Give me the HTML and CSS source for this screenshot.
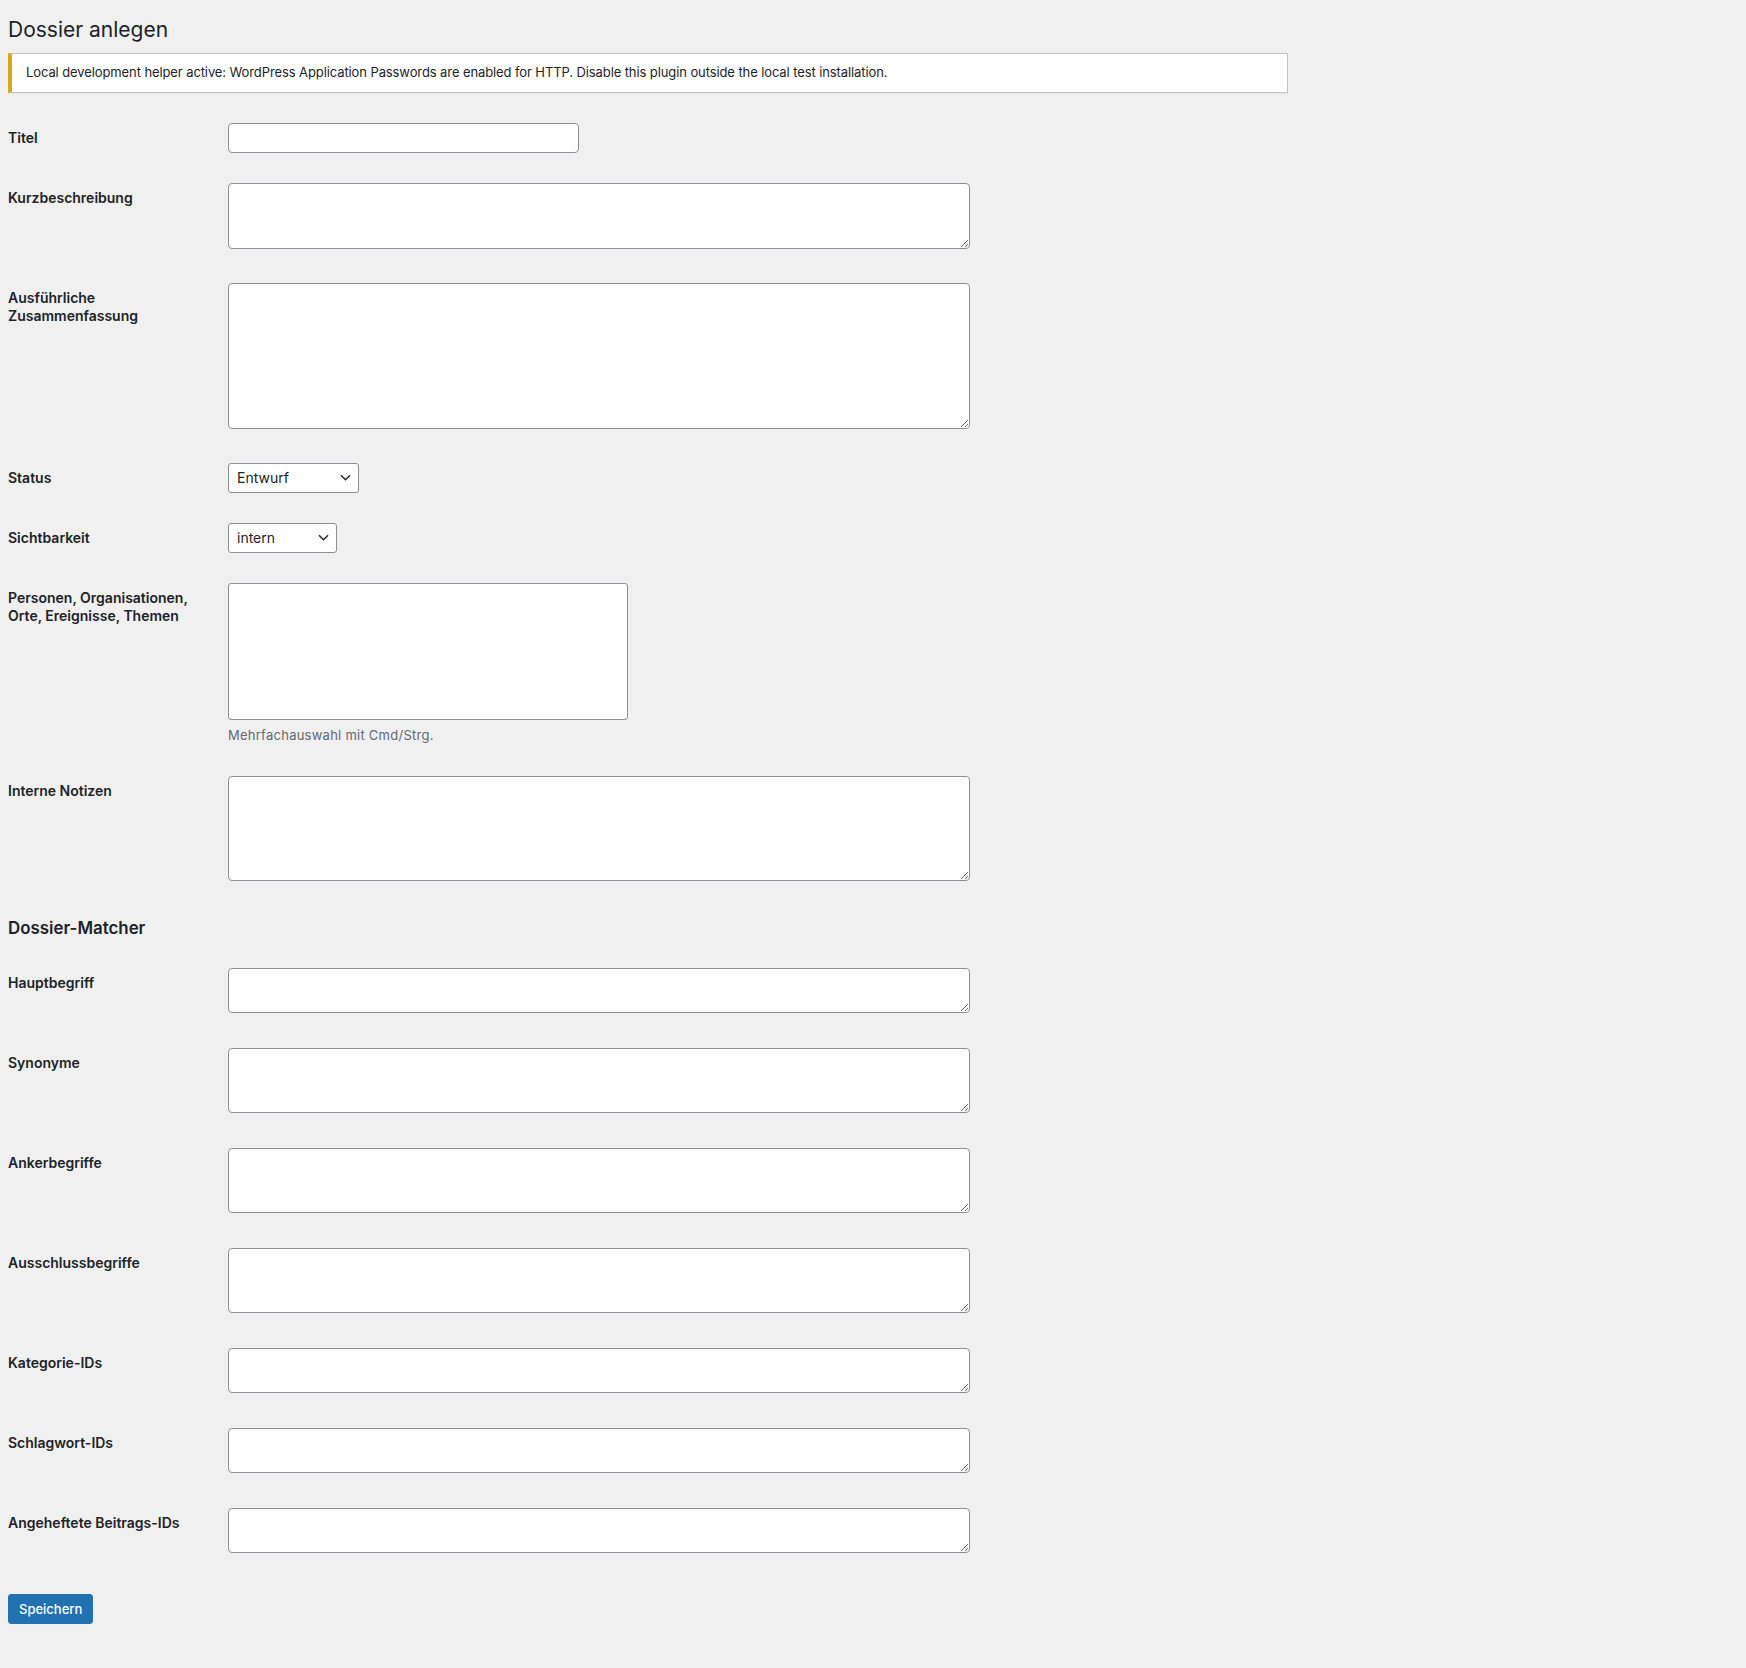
FILE: index.html
```html
<!DOCTYPE html>
<html lang="de">
<head>
<meta charset="UTF-8">
<meta name="viewport" content="width=device-width, initial-scale=1.0">
<title>Dossier anlegen</title>
<link rel="stylesheet" href="styles.css">
</head>
<body>

<div class="wrap">
    <h1>Dossier anlegen</h1>

    <div class="notice notice-warning">
        <p>Local development helper active: WordPress Application Passwords are enabled for HTTP. Disable this plugin outside the local test installation.</p>
    </div>

    <form method="post" onsubmit="return false">
        <table class="form-table">
            <tr>
                <th><label for="title">Titel</label></th>
                <td><input type="text" id="title" class="regular-text"></td>
            </tr>
            <tr>
                <th><label for="short">Kurzbeschreibung</label></th>
                <td><textarea id="short" class="large-text rows-3"></textarea></td>
            </tr>
            <tr>
                <th><label for="summary">Ausführliche Zusammenfassung</label></th>
                <td><textarea id="summary" class="large-text rows-7"></textarea></td>
            </tr>
            <tr>
                <th><label for="status">Status</label></th>
                <td>
                    <span class="select-wrap">
                        <select id="status" class="select-status">
                            <option>Entwurf</option>
                            <option>Veröffentlicht</option>
                        </select>
                        <svg class="chevron" viewBox="0 0 11 7" width="11" height="7"><path d="M1 1.2l4.5 4.5 4.5-4.5" fill="none" stroke="#1d2327" stroke-width="1.4"/></svg>
                    </span>
                </td>
            </tr>
            <tr>
                <th><label for="visibility">Sichtbarkeit</label></th>
                <td>
                    <span class="select-wrap">
                        <select id="visibility" class="select-visibility">
                            <option>intern</option>
                            <option>öffentlich</option>
                        </select>
                        <svg class="chevron" viewBox="0 0 11 7" width="11" height="7"><path d="M1 1.2l4.5 4.5 4.5-4.5" fill="none" stroke="#1d2327" stroke-width="1.4"/></svg>
                    </span>
                </td>
            </tr>
            <tr>
                <th><label for="entities">Personen, Organisationen, Orte, Ereignisse, Themen</label></th>
                <td>
                    <select id="entities" class="multi-select" multiple></select>
                    <p class="description">Mehrfachauswahl mit Cmd/Strg.</p>
                </td>
            </tr>
            <tr>
                <th><label for="notes">Interne Notizen</label></th>
                <td><textarea id="notes" class="large-text rows-5"></textarea></td>
            </tr>
        </table>

        <h2>Dossier-Matcher</h2>

        <table class="form-table">
            <tr>
                <th><label for="main_term">Hauptbegriff</label></th>
                <td><textarea id="main_term" class="large-text rows-2"></textarea></td>
            </tr>
            <tr>
                <th><label for="synonyms">Synonyme</label></th>
                <td><textarea id="synonyms" class="large-text rows-3"></textarea></td>
            </tr>
            <tr>
                <th><label for="anchors">Ankerbegriffe</label></th>
                <td><textarea id="anchors" class="large-text rows-3"></textarea></td>
            </tr>
            <tr>
                <th><label for="excludes">Ausschlussbegriffe</label></th>
                <td><textarea id="excludes" class="large-text rows-3"></textarea></td>
            </tr>
            <tr>
                <th><label for="cat_ids">Kategorie-IDs</label></th>
                <td><textarea id="cat_ids" class="large-text rows-2"></textarea></td>
            </tr>
            <tr>
                <th><label for="tag_ids">Schlagwort-IDs</label></th>
                <td><textarea id="tag_ids" class="large-text rows-2"></textarea></td>
            </tr>
            <tr>
                <th><label for="post_ids">Angeheftete Beitrags-IDs</label></th>
                <td><textarea id="post_ids" class="large-text rows-2"></textarea></td>
            </tr>
        </table>

        <p class="submit"><button type="submit" class="button-primary">Speichern</button></p>
    </form>
</div>

</body>
</html>
```

FILE: styles.css
```css
body {
    margin: 0;
    background-color: #f0f0f1;
    color: #1d2327;
    font-family: Inter, "Noto Sans", sans-serif;
    font-size: 13px;
    line-height: 1.4;
}
.wrap {
    max-width: 1280px;
    margin: 0 8px;
}
h1 {
    font-size: 21px;
    font-weight: 400;
    line-height: 1.3;
    margin: 0;
    padding: 15.5px 0 5px;
}
.notice {
    background: #fff;
    border: 1px solid #c3c4c7;
    border-left-width: 4px;
    box-shadow: 0 1px 1px rgba(0, 0, 0, 0.04);
    margin: 5px 0 15px;
    padding: 1px 12px;
}
.notice-warning {
    border-left-color: #dba617;
}
.notice p {
    margin: 6.5px 0;
    padding: 2px;
    font-size: 13px;
    line-height: 1.5;
    letter-spacing: -0.1px;
}
.form-table {
    border-collapse: collapse;
    width: 100%;
    margin: 0;
}
.form-table th {
    width: 200px;
    padding: 21px 10px 19px 0;
    text-align: left;
    vertical-align: top;
    font-size: 14px;
    font-weight: 600;
    line-height: 1.3;
}
.form-table td {
    padding: 15px 10px;
    vertical-align: top;
    line-height: 1.3;
    font-size: 14px;
}
input[type="text"],
textarea,
select {
    box-sizing: border-box;
    font-family: inherit;
    font-size: 14px;
    color: #2c3338;
    background-color: #fff;
    border: 1px solid #8c8f94;
    border-radius: 4px;
    box-shadow: 0 0 0 transparent;
    margin: 0;
}
.regular-text {
    display: block;
    width: 351px;
    height: 30px;
    padding: 0 8px;
}
textarea.large-text {
    display: block;
    width: 742px;
    padding: 2px 6px;
    margin-bottom: 4.5px;
    line-height: 1.42;
}
.rows-2 { height: 45.5px; }
.rows-3 { height: 65.5px; }
.rows-5 { height: 105px; }
.rows-7 { height: 145.5px; }

.select-wrap {
    position: relative;
    display: block;
    width: max-content;
}
.select-wrap select {
    display: block;
    appearance: none;
    -webkit-appearance: none;
    height: 30px;
    padding: 0 24px 0 8px;
    line-height: 28px;
    border-radius: 3px;
    color: #1d2327;
}
.select-status { width: 131px; }
.select-visibility { width: 109px; }
.chevron {
    position: absolute;
    right: 8px;
    top: 11px;
    pointer-events: none;
}
.multi-select {
    display: block;
    width: 400px;
    height: 137px;
    padding: 2px;
    border-radius: 3px;
    overflow: hidden;
}
.description {
    margin: 6px 0 0;
    font-size: 13px;
    line-height: 19.5px;
    letter-spacing: 0.25px;
    color: #646970;
}
h2 {
    font-size: 16.9px;
    font-weight: 600;
    line-height: 1.3;
    margin: 17.5px 0 13px;
}
.submit {
    margin: 21.5px 0 0;
    padding: 0;
}
.button-primary {
    font-family: inherit;
    font-size: 13px;
    font-weight: 500;
    line-height: 28px;
    height: 30px;
    padding: 0 10px;
    color: #fff;
    background-color: #2271b1;
    border: 1px solid #2271b1;
    border-radius: 3px;
    cursor: pointer;
}
.button-primary:hover {
    background-color: #135e96;
    border-color: #135e96;
}
```
